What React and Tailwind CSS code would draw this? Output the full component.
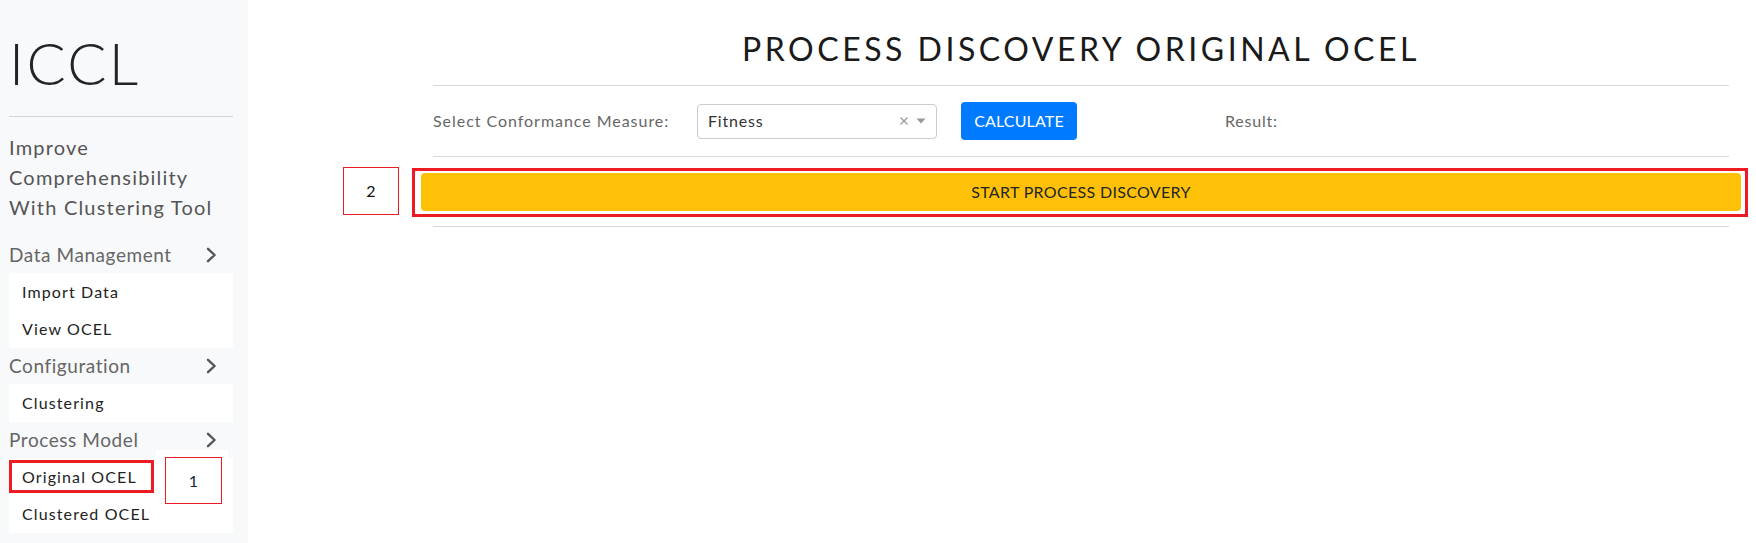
import React from "react";

const FONT = { fontFamily: '"Lato", "Open Sans", sans-serif' };

function Chevron() {
  return (
    <svg width="11" height="16" viewBox="0 0 11 16" fill="none">
      <polyline points="2,1.8 8.6,8 2,14.2" stroke="#555" strokeWidth="2.4" strokeLinecap="round" strokeLinejoin="round" />
    </svg>
  );
}

function NavHeader({ label }) {
  return (
    <div className="flex h-[36px] items-center justify-between pr-[16px] text-[19px] tracking-[0.03em] text-[#666]">
      <span>{label}</span>
      <Chevron />
    </div>
  );
}

function NavItem({ label, h = "h-[37px]", children }) {
  return (
    <div className={`relative flex ${h} items-center pl-[13px] text-[16px] tracking-[0.07em] text-[#222]`}>
      <span>{label}</span>
      {children}
    </div>
  );
}

export default function App() {
  return (
    <div className="flex min-h-[543px] w-full bg-white" style={FONT}>
      <aside className="w-[248px] shrink-0 bg-[#f8f9fa] pl-[9px] pr-[15px]">
        <div className="border-b border-[#d4d4d4] pb-[24px] pt-[34px] text-[58px] font-light leading-none tracking-[0.04em] text-[#212529]">
          ICCL
        </div>
        <div className="mt-[15px] text-[20px] leading-[30px] tracking-[0.06em] text-[#555]">
          <div>Improve</div>
          <div>Comprehensibility</div>
          <div>With Clustering Tool</div>
        </div>
        <div className="mt-[15px]">
          <NavHeader label="Data Management" />
          <div className="bg-white">
            <NavItem label="Import Data" h="h-[37px]" />
            <NavItem label="View OCEL" h="h-[38px]" />
          </div>
          <NavHeader label="Configuration" />
          <div className="bg-white">
            <NavItem label="Clustering" h="h-[38px]" />
          </div>
          <NavHeader label="Process Model" />
          <div className="bg-white">
            <NavItem label="Original OCEL" h="h-[37px]">
              <div className="absolute left-0 top-[2px] h-[33px] w-[145px] border-[3px] border-[#ed1c24]" />
              <div className="absolute left-[147px] top-[-8px] h-[10px] w-[72px] bg-white" />
              <div className="absolute left-[156px] top-[-1px] flex h-[47px] w-[57px] items-center justify-center border border-[#ed1c24] bg-white text-[16px] tracking-normal text-[#1c2340]">
                1
              </div>
            </NavItem>
            <NavItem label="Clustered OCEL" h="h-[38px]" />
          </div>
        </div>
      </aside>

      <main className="flex-1 pl-[185px] pr-[27px]">
        <h1 className="border-b border-[#d9d9d9] pb-[20px] pt-[33px] text-center text-[32px] font-normal leading-none tracking-[0.11em] text-[#1a1a1a]">
          PROCESS DISCOVERY ORIGINAL OCEL
        </h1>

        <div className="flex h-[71px] items-center border-b border-[#d9d9d9]">
          <div className="w-[264px] text-[16px] tracking-[0.06em] text-[#666]">Select Conformance Measure:</div>
          <div className="flex h-[35px] w-[240px] items-center justify-between rounded-[4px] border border-[#cccccc] pl-[10px] pr-[10px]">
            <span className="text-[16px] tracking-[0.05em] text-[#333]">Fitness</span>
            <span className="flex items-center gap-[7px]">
              <svg width="10" height="10" viewBox="0 0 10 10">
                <path d="M1.5 1.5 L8.5 8.5 M8.5 1.5 L1.5 8.5" stroke="#999" strokeWidth="1.3" />
              </svg>
              <svg width="10" height="6" viewBox="0 0 10 6">
                <path d="M0.5 0.5 L9.5 0.5 L5 5.5 Z" fill="#999" />
              </svg>
            </span>
          </div>
          <button className="ml-[24px] flex h-[38px] w-[116px] items-center justify-center rounded-[4px] bg-[#007bff] text-[16px] tracking-[0.01em] text-white">
            CALCULATE
          </button>
          <div className="ml-[148px] text-[16px] tracking-[0.05em] text-[#666]">Result:</div>
        </div>

        <div className="border-b border-[#d9d9d9] pb-[15px] pt-[16px]">
          <div className="relative -mx-3">
            <button className="flex h-[38px] w-full items-center justify-center rounded-[4px] bg-[#ffc107] text-[16px] tracking-[0.02em] text-[#212529]">
              START PROCESS DISCOVERY
            </button>
            <div className="pointer-events-none absolute -bottom-[6px] -left-[9px] -right-[7px] -top-[5px] border-[3px] border-[#ed1c24]" />
            <div className="absolute left-[-78px] top-[-6px] flex h-[48px] w-[56px] items-center justify-center border border-[#ed1c24] text-[16px] text-[#111]">
              2
            </div>
          </div>
        </div>
      </main>
    </div>
  );
}
